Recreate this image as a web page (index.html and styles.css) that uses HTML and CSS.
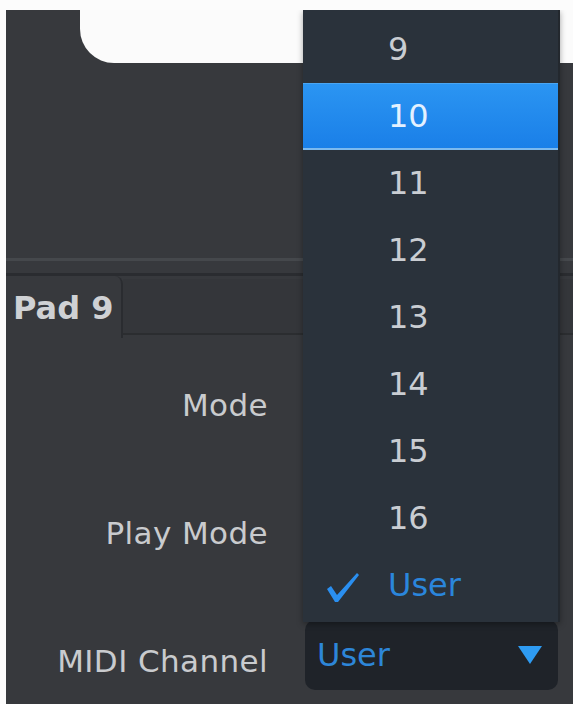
FILE: index.html
```html
<!DOCTYPE html>
<html>
<head>
<meta charset="utf-8">
<link rel="stylesheet" href="styles.css">
</head>
<body>
<div class="panel">
  <div class="pad-shape"></div>
  <div class="separator"></div>
  <div class="tabbar">
    <div class="tab">Pad 9</div>
    <div class="tab-fill"></div>
  </div>
  <div class="form">
    <div class="label">Mode</div>
    <div class="control"></div>
    <div class="label">Play Mode</div>
    <div class="control"></div>
    <div class="label">MIDI Channel</div>
    <div class="control">
      <div class="select">
        <span class="select-value">User</span>
        <svg class="select-arrow" width="24" height="18" viewBox="0 0 24 18"><polygon points="0,0 24,0 12,18" fill="#2e9bf2"/></svg>
      </div>
    </div>
  </div>
  <ul class="menu">
    <li class="item">9</li>
    <li class="item active">10</li>
    <li class="item">11</li>
    <li class="item">12</li>
    <li class="item">13</li>
    <li class="item">14</li>
    <li class="item">15</li>
    <li class="item">16</li>
    <li class="item checked">
      <svg class="check" width="36" height="32" viewBox="0 0 36 32"><path d="M2 18 L6 15 L12 24 L32 2 L34 4 L13 31 L10 31 Z" fill="#2a8ff0"/></svg>
      User
    </li>
  </ul>
</div>
</body>
</html>
```
FILE: styles.css
```css
html, body {
  margin: 0;
  padding: 0;
  background: #fcfcfc;
  font-family: "DejaVu Sans", Verdana, sans-serif;
}

.panel {
  position: relative;
  margin: 10px 0 0 6px;
  height: 694px;
  background: #37393d;
  overflow: hidden;
}

.pad-shape {
  margin-left: 74px;
  height: 53px;
  background: #fbfbfb;
  border-bottom-left-radius: 34px;
}

.separator {
  margin-top: 195px;
  height: 3px;
  background: #45484c;
}

.tabbar {
  margin-top: 12px;
  border-top: 3px solid #2a2c30;
  display: flex;
  height: 62px;
}

.tab {
  width: 108px;
  padding-left: 7px;
  padding-top: 13px;
  font-weight: bold;
  font-size: 32px;
  color: #cfd1d4;
  border-right: 2px solid #2a2c30;
  border-top-right-radius: 8px;
  box-sizing: content-box;
  white-space: nowrap;
}

.tab-fill {
  flex: 1;
  margin-top: 3px;
  height: 54px;
  background: #34363a;
  border-bottom: 2px solid #2b2d30;
}

.form {
  display: grid;
  grid-template-columns: 262px 1fr;
  grid-auto-rows: 128px;
  column-gap: 37px;
  align-items: center;
  margin-top: 3px;
}

.label {
  text-align: right;
  font-size: 31px;
  letter-spacing: 0.4px;
  color: #c9cbce;
}

.select {
  width: 253px;
  height: 70px;
  box-sizing: border-box;
  background: #1f2329;
  border-radius: 10px;
  display: flex;
  align-items: center;
  justify-content: space-between;
  padding: 0 16px 0 12px;
  margin-top: -12px;
}

.select-value {
  font-size: 32px;
  color: #2d86d8;
}

.menu {
  position: absolute;
  left: 297px;
  top: 0;
  width: 257px;
  height: 612px;
  margin: 0;
  padding: 6px 0 0 0;
  box-sizing: border-box;
  list-style: none;
  background: #2a323b;
  border-right: 2px solid #23282e;
  box-shadow: 0 2px 6px rgba(0, 0, 0, 0.35);
}

.item {
  position: relative;
  height: 67px;
  line-height: 67px;
  padding-left: 85px;
  font-size: 32px;
  color: #c9cdd2;
}

.item.active {
  background: linear-gradient(#2b95f2, #1a7fe8);
  border-top: 1px solid #4aa6f2;
  border-bottom: 2px solid #7cb9ee;
  height: 64px;
  line-height: 64px;
  color: #e4f1ff;
}

.item.checked {
  color: #2a86dc;
}

.check {
  position: absolute;
  left: 22px;
  top: 19px;
}
```
